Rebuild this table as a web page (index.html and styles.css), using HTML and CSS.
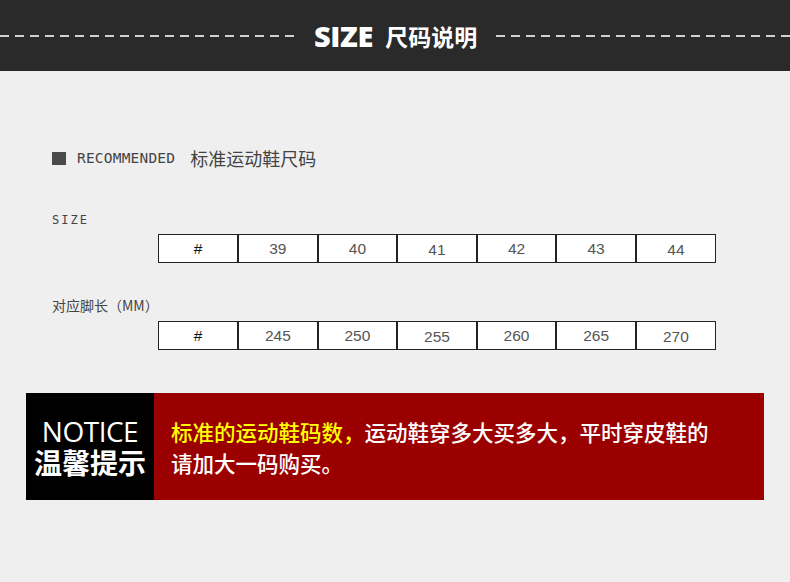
FILE: index.html
```html
<!DOCTYPE html>
<html>
<head>
    <title>尺码说明</title>
    <link rel="stylesheet" href="styles.css">
</head>
<body>
    <header class="banner">
        <span class="dash"></span>
        <h1 class="title"><b>SIZE</b> 尺码说明</h1>
        <span class="dash"></span>
    </header>

    <div class="content">
        <div class="recommend">
            <span class="square"></span>
            <span class="rec-en">RECOMMENDED</span>
            <span class="rec-cn">标准运动鞋尺码</span>
        </div>

        <div class="label label-size">SIZE</div>
        <table class="size-table">
            <tr>
                <td class="hash">#</td>
                <td>39</td><td>40</td><td class="low">41</td><td>42</td><td>43</td><td class="low">44</td>
            </tr>
        </table>

        <div class="label label-foot">对应脚长（MM）</div>
        <table class="size-table">
            <tr>
                <td class="hash">#</td>
                <td>245</td><td>250</td><td class="low">255</td><td>260</td><td>265</td><td class="low">270</td>
            </tr>
        </table>
    </div>

    <div class="notice">
        <div class="notice-head">
            <div class="notice-en">NOTICE</div>
            <div class="notice-cn">温馨提示</div>
        </div>
        <div class="notice-body">
            <p><span class="yellow">标准的运动鞋码数，</span>运动鞋穿多大买多大，平时穿皮鞋的</p>
            <p>请加大一码购买。</p>
        </div>
    </div>
</body>
</html>
```

FILE: styles.css
```css
body {
    margin: 0;
    width: 790px;
    height: 582px;
    background-color: #efefef;
    font-family: "Liberation Sans", "Noto Sans CJK SC", sans-serif;
    color: #333;
    overflow: hidden;
}

.banner {
    height: 71px;
    background-color: #2a2a2a;
    display: flex;
    align-items: center;
}

.dash {
    flex: 1;
    height: 2px;
    background-image: repeating-linear-gradient(90deg, #d0d0d0 0, #d0d0d0 9px, transparent 9px, transparent 15px);
}

.title {
    margin: 0 19px 0 20px;
    color: #fff;
    font-size: 23px;
    font-weight: bold;
    font-family: "Noto Sans CJK SC", sans-serif;
    display: flex;
    align-items: center;
    gap: 12px;
}

.title b {
    font-family: "Open Sans", sans-serif;
    font-size: 29px;
    font-weight: 800;
    letter-spacing: -0.3px;
}

.content {
    padding: 77px 0 0 52px;
}

.recommend {
    display: flex;
    align-items: center;
    height: 20px;
}

.square {
    width: 14px;
    height: 13px;
    background-color: #4a4a4a;
    margin-right: 11px;
}

.rec-en {
    font-family: "DejaVu Sans Mono", monospace;
    font-size: 14.5px;
    color: #444;
    letter-spacing: 0.2px;
    margin-right: 15px;
}

.rec-cn {
    font-family: "Noto Sans CJK SC", sans-serif;
    font-size: 18px;
    color: #444;
}

.label {
    color: #444;
    height: 16px;
    line-height: 16px;
}

.label-size {
    margin-top: 44px;
    letter-spacing: 2px;
    font-family: "DejaVu Sans Mono", monospace;
    font-size: 12px;
}

.label-foot {
    margin-top: 34px;
    font-family: "Noto Sans CJK SC", sans-serif;
    font-size: 14px;
}

.size-table {
    width: 558px;
    table-layout: fixed;
    margin: 0 0 0 106px;
    border-collapse: collapse;
    background-color: #fff;
    border: 1px solid #222;
}

.label-size + .size-table {
    margin-top: 6px;
}

.label-foot + .size-table {
    margin-top: 8px;
}

.size-table td {
    height: 24px;
    padding: 0;
    border-right: 2px solid #222;
    text-align: center;
    font-size: 15.5px;
    color: #555;
    font-family: "Liberation Sans", sans-serif;
}

.size-table td:last-child {
    border-right: none;
}

.size-table td.low {
    padding-top: 3px;
}

.size-table td.hash {
    color: #111;
}

.notice {
    margin: 43px 26px 0 26px;
    height: 107px;
    display: flex;
}

.notice-head {
    width: 128px;
    background-color: #000;
    color: #fff;
    display: flex;
    flex-direction: column;
    align-items: center;
    justify-content: center;
}

.notice-en {
    font-family: "Open Sans", sans-serif;
    font-size: 28px;
    line-height: 31px;
    letter-spacing: -0.5px;
}

.notice-cn {
    font-family: "Noto Sans CJK SC", sans-serif;
    font-size: 28px;
    font-weight: bold;
    line-height: 31px;
}

.notice-body {
    flex: 1;
    background-color: #9b0000;
    padding: 23px 0 0 17px;
    color: #fff;
    font-family: "Noto Sans CJK SC", sans-serif;
    font-size: 21.5px;
    font-weight: 500;
}

.notice-body p {
    margin: 0;
    line-height: 31px;
}

.yellow {
    color: #ffff00;
}
```
